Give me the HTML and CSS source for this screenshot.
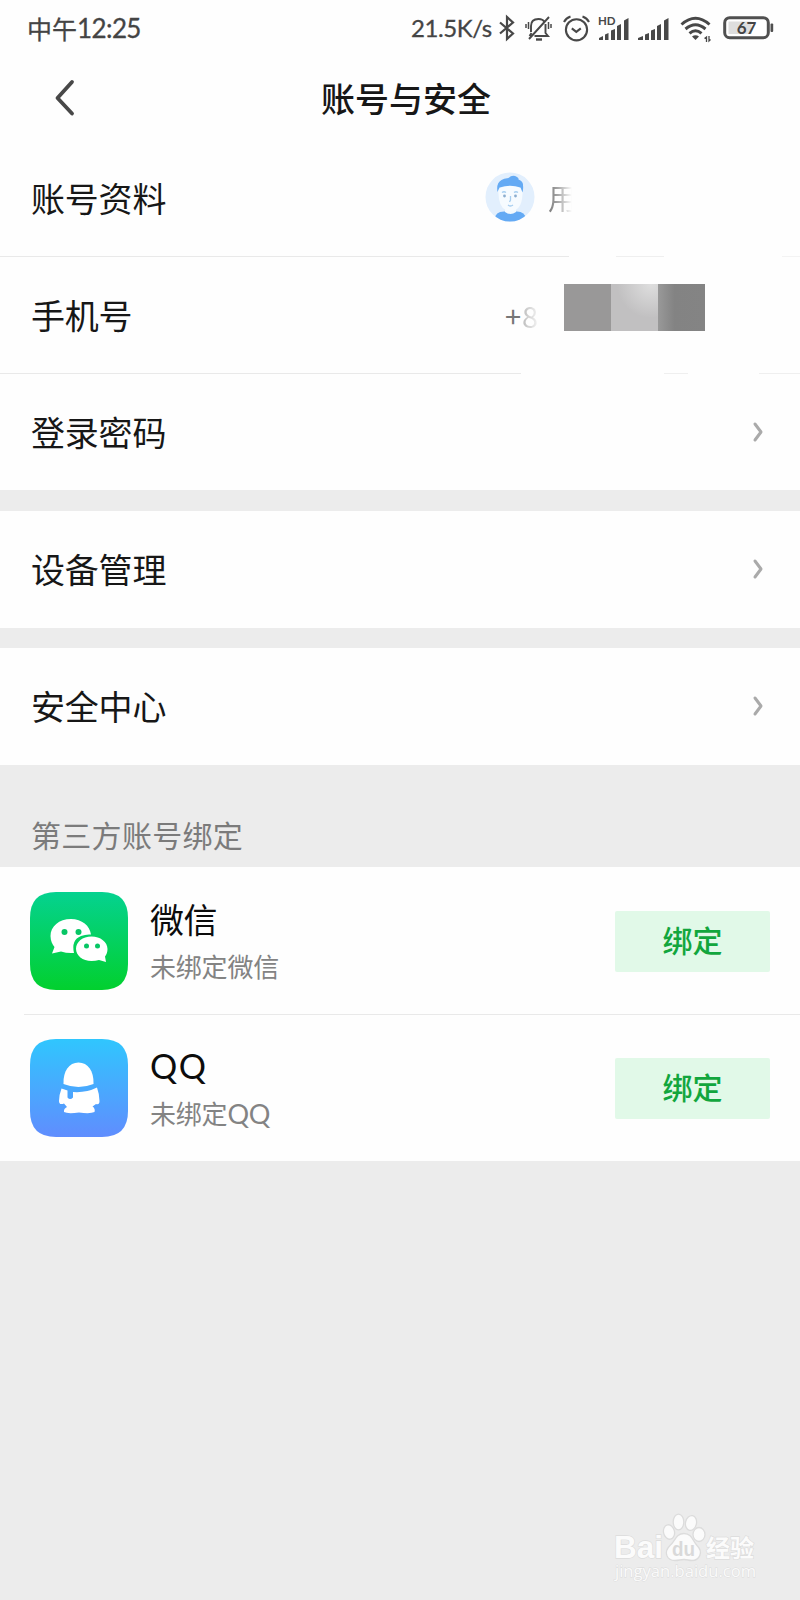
FILE: index.html
```html
<!DOCTYPE html>
<html lang="zh-CN">
<head>
<meta charset="utf-8">
<title>账号与安全</title>
<link rel="stylesheet" href="styles.css">
</head>
<body>
<div class="screen">
  <div class="status">
    <div class="clock">中午<span class="digits">12:25</span></div>
    <div class="indicators">
      <span class="speed">21.5K/s</span>
      <svg class="bt" width="16" height="26" viewBox="0 0 16 26" fill="none" stroke="#484848" stroke-width="2.200"><path d="M1 7.500 14 18.500 8 24V2l6 5.500L1 18.500"/></svg>
      <svg class="bell" width="27" height="26" viewBox="0 0 27 26" fill="none" stroke="#484848" stroke-width="1.900"><path d="M6 17V11C6 6 9 4 13.500 4c3 0 5 1 6 3M20.500 9v9l2.500 3H9.500M4.500 21 6.500 18M4 24 24 2"/><path d="M11 24.500h6" stroke-width="2.400"/><path d="M3.500 7v7M1 9v4M23.500 7v7M26 9v4" stroke-width="1.500"/></svg>
      <svg class="alarm" width="27" height="27" viewBox="0 0 27 27" fill="none" stroke="#484848" stroke-width="2.100"><circle cx="13.500" cy="14.800" r="10.600"/><path d="M8.800 13.300l4.500 3.500 4.500-3.500M1 7Q3 3 7.500 1.500M26 7Q24 3 19.500 1.500"/></svg>
      <svg class="sig-hd" width="32" height="25" viewBox="0 0 32 25" fill="#484848"><text x="0" y="9" class="hd">HD</text><path d="M1 24v-2l4-2v4zM7 18.500l3.500-1.500v7H7zM13 14.500l4-1.500v11h-4zM19 10l4-2v16h-4zM26 4.500 30.500 2v22H26z"/></svg>
      <svg class="sig" width="32" height="25" viewBox="0 0 32 25" fill="#484848"><path d="M0 24v-2l5-2v4zM7 18.500 11 17v7H7zM13 14.500 17 13v11h-4zM19 10l4-2v16h-4zM26 4.500 30.500 2v22H26z"/></svg>
      <svg class="wifi" width="32" height="25" viewBox="0 0 32 25" fill="none" stroke="#484848" stroke-width="3"><path d="M1.500 8.500q14-12.500 28 0M5.500 13q10-8.500 20 0M9.500 17.300q6-5 12 0"/><path d="M12 20.500q3.500-2.500 7 0L15.500 24z" fill="#484848" stroke="none"/><path d="M24.500 22.500 26.500 21v5M30.500 23.500l-1.500 1.500V20" stroke-width="1.300"/></svg>
      <svg class="battery" width="51" height="24" viewBox="0 0 51 24"><rect x="1.700" y="1.700" width="43.600" height="20" rx="5" fill="#fff" stroke="#505050" stroke-width="3"/><rect x="5.500" y="5.500" width="23" height="12.500" fill="#dedede"/><rect x="47.500" y="7.500" width="2.700" height="8.500" rx="1" fill="#505050"/><text x="23.500" y="18" text-anchor="middle" class="percent">67</text></svg>
    </div>
  </div>
  <header class="header">
    <svg class="back" width="22" height="38" viewBox="0 0 22 38" fill="none" stroke="#484848" stroke-width="3.800" stroke-linecap="round" stroke-linejoin="round"><path d="M18 2 3.500 18 18 33.500"/></svg>
    <h1 class="title">账号与安全</h1>
  </header>

  <section class="group">
    <div class="row">
      <span class="label">账号资料</span>
      <div class="profile">
        <svg class="avatar" width="50" height="50" viewBox="0 0 50 50">
          <defs><clipPath id="disc"><circle cx="25" cy="25" r="24.500"/></clipPath></defs>
          <circle cx="25" cy="25" r="24.500" fill="#e2effd"/>
          <g clip-path="url(#disc)"><path d="M10 47Q10 39.500 19 39.500h13Q40 39.500 41 47v5H10z" fill="#64aaf4"/><path d="M20 32h11v8q-5.500 4-11 0z" fill="#f4fafe"/></g>
          <path d="M13 17q12-7 25 0l-1 10q-2 12-11.500 12T14 27z" fill="#f6fbff"/>
          <path d="M12.500 20Q11 11 16.500 8q2-1.500 7-2 4-4 8.500-1 2 1 1.500 2.500 5 2 4.500 6 .5 3-.5 7l-2-5q-10-3.500-21 0z" fill="#64aaf4"/>
          <path d="M17 20.500q2-1.500 4 0M29 20.500q2-1.500 4 0M25.500 24v4l-1 2M23 33q2.500 2 5 0" fill="none" stroke="#a7cef0" stroke-width="1.300"/><circle cx="19.500" cy="24" r="1.400" fill="#8badce"/><circle cx="30.500" cy="24" r="1.400" fill="#8badce"/>
        </svg>
        <span class="nickname">用</span>
      </div>
    </div>
    <div class="rule rule-a"></div>
    <div class="row">
      <span class="label">手机号</span>
      <div class="phone"><span class="code">+<span class="faded">8</span></span>
        <div class="mask"><i class="m1"></i><i class="m2"></i><i class="m3"></i></div>
      </div>
    </div>
    <div class="rule rule-b"></div>
    <div class="row"><span class="label">登录密码</span><svg class="chevron" width="10" height="20" viewBox="0 0 10 20"><path d="M2 2 8 10l-6 8"/></svg></div>
  </section>
  <section class="group devices"><div class="row"><span class="label">设备管理</span><svg class="chevron" width="10" height="20" viewBox="0 0 10 20"><path d="M2 2 8 10l-6 8"/></svg></div></section>
  <section class="group security"><div class="row"><span class="label">安全中心</span><svg class="chevron" width="10" height="20" viewBox="0 0 10 20"><path d="M2 2 8 10l-6 8"/></svg></div></section>

  <h2 class="section-title">第三方账号绑定</h2>
  <section class="accounts">
    <div class="account">
      <svg class="app" width="98" height="98" viewBox="0 0 98 98">
        <defs><linearGradient id="green" x2="0" y2="1"><stop stop-color="#05d290"/><stop offset="1" stop-color="#02d02e"/></linearGradient></defs>
        <path d="M26 0h46Q98 0 98 26v46Q98 98 72 98H26Q0 98 0 72V26Q0 0 26 0z" fill="url(#green)"/>
        <path d="M41 27c-12 0-20.500 7.500-20.500 17 0 5 2 8.500 4 11l-2.500 6.500 9-2q6 2 13 1.500-3-13 7-17 5-2 10-1.500C60 34 52 27 41 27z" fill="#fff"/>
        <path d="M61.500 44.500c-9 0-15.500 5.500-15.500 12.200S52.500 69 61.500 69q4 0 7.500-1l7 2-1-5.500c1.500-2 2.500-4.500 2.500-7.500 0-7-7-12.500-16-12.500z" fill="#fff"/>
        <g fill="#07c665"><circle cx="34.500" cy="40" r="3"/><circle cx="48.500" cy="40" r="3"/><circle cx="56.500" cy="54" r="2.500"/><circle cx="67.500" cy="54" r="2.500"/></g>
      </svg>
      <div class="info"><div class="name">微信</div><div class="state">未绑定微信</div></div>
      <button class="bind">绑定</button>
    </div>
    <div class="divider"></div>
    <div class="account last">
      <svg class="app" width="98" height="98" viewBox="0 0 98 98">
        <defs><linearGradient id="blue" x2="0" y2="1"><stop stop-color="#30c6fe"/><stop offset="1" stop-color="#608dfe"/></linearGradient></defs>
        <path d="M26 0h46Q98 0 98 26v46Q98 98 72 98H26Q0 98 0 72V26Q0 0 26 0z" fill="url(#blue)"/>
        <path d="M33.500 45C33 32 39 23.500 48.500 23.500S64 32 63.500 45q-15 6-30 0z" fill="#fff"/>
        <path d="M31.500 49.500 37.500 51.500v7q2.500 3 5.500 0v-5.500Q56 54 67 48.500q2.500 7 2.500 13.500 0 4-3.500 3l-3.500 2.500q3 2 2 5.500-4 2-15.500.5-11.500 1.500-15-.5-.5-3.500 3-5l-3-3.500q-5 2-5-2.500 0-6 2.500-12.500z" fill="#fff"/>
      </svg>
      <div class="info"><div class="name latin">QQ</div><div class="state">未绑定<span class="latin-small">QQ</span></div></div>
      <button class="bind">绑定</button>
    </div>
  </section>

  <svg class="watermark" width="148" height="76" viewBox="0 0 148 76">
    <g fill="#fbfbfb" stroke="#dcdcdc" stroke-width="1.300">
      <text x="0" y="44" class="wm-bai" textLength="49" lengthAdjust="spacingAndGlyphs">Bai</text>
      <ellipse cx="55" cy="18" rx="5.500" ry="7.300" transform="rotate(-12 55 18)"/><ellipse cx="64.500" cy="8" rx="5.300" ry="7.800"/><ellipse cx="77" cy="9" rx="5.500" ry="7.500" transform="rotate(12 77 9)"/><ellipse cx="85" cy="20.500" rx="6" ry="7"/>
      <path d="M70 19.500c8 0 9 8 13 12 7 7 2 15-5 15-4 0-4-1-8-1s-5 1-9 1c-8 0-12-8-5-15 5-4 6-12 14-12z"/>
      <text x="92" y="43" class="wm-cn" textLength="48">经验</text>
    </g>
    <text x="58" y="42" class="wm-du" textLength="23" lengthAdjust="spacingAndGlyphs">du</text>
    <text x="1" y="63" class="wm-url" textLength="141" lengthAdjust="spacingAndGlyphs">jingyan.baidu.com</text>
  </svg>
</div>
</body>
</html>
```

FILE: styles.css
```css
* { box-sizing: border-box; }
body { margin: 0; background: #ececec; }
.screen {
  position: relative;
  width: 800px;
  height: 1600px;
  overflow: hidden;
  background: #ececec;
  color: #171717;
  font-family: "Noto Sans CJK SC", sans-serif;
}
svg { display: block; flex: none; overflow: visible; }

.status { display: flex; justify-content: space-between; height: 58px; padding: 0 26px 2px 27px; background: #fefefe; color: #444; }
.clock { display: flex; align-items: center; font-size: 25px; line-height: 56px; -webkit-text-stroke: .3px; }
.digits { font-family: Lato, sans-serif; font-size: 26px; letter-spacing: -.6px; }
.indicators { display: flex; align-items: center; }
.speed { width: 82px; margin-right: 6px; font: 24px/56px Lato, sans-serif; letter-spacing: -.4px; white-space: nowrap; -webkit-text-stroke: .3px; }
.bt { margin-right: 10px; }
.bell { margin-right: 11px; }
.alarm { margin-right: 8px; }
.sig-hd { margin-right: 8px; }
.sig { margin-right: 10px; }
.wifi { margin-right: 11px; }
.hd { font: 700 11.500px Lato, sans-serif; }
.percent { font: 700 17px Lato, sans-serif; fill: #444; }

.header { display: flex; align-items: center; height: 82px; padding-left: 54px; background: #fefefe; }
.title { width: 170px; margin: -2px 0 0 245px; font-size: 34px; line-height: 50px; font-weight: 500; white-space: nowrap; }

.group { margin-bottom: 21px; background: #fefefe; }
.row { display: flex; align-items: center; justify-content: space-between; height: 116px; padding: 0 37px 0 31px; }
.devices { margin-bottom: 20px; }
.security { margin-bottom: 0; }
.devices .row, .security .row { height: 117px; padding-bottom: 2px; }
.label { font-size: 34px; line-height: 50px; letter-spacing: -.2px; }
.chevron { fill: none; stroke: #aaa; stroke-width: 3; stroke-linecap: round; stroke-linejoin: round; }
.profile { display: flex; align-items: center; gap: 13px; width: 278px; padding-bottom: 2px; }
.nickname { width: 30px; font-size: 29px; line-height: 44px; color: transparent; background: linear-gradient(90deg, #777, #aaa 35%, #fefefe 80%); background-clip: text; -webkit-background-clip: text; }
.phone { display: flex; align-items: center; width: 258px; }
.code { width: 59px; color: #777; font: 29px/40px "Noto Sans CJK SC", sans-serif; letter-spacing: 1px; white-space: nowrap; }
.faded { color: transparent; background: linear-gradient(90deg, #bbb, #f7f7f7); background-clip: text; -webkit-background-clip: text; }
.mask { display: flex; height: 47px; margin-bottom: 15px; }
.mask i { width: 47px; }
.m1 { background: #999898; }
.m2 { background: radial-gradient(circle at 85% 0, #dedede, #c1c0c1 55%); }
.m3 { background: linear-gradient(90deg, #999, #838383 35%, #848484); }
.rule { height: 1px; }
.rule-a { background: linear-gradient(90deg, #e9e9e9 569px, #fefefe 569px 616px, #efefef 616px 664px, #fefefe 664px 782px, #f3f3f3 782px); }
.rule-b { background: linear-gradient(90deg, #e9e9e9 521px, #fefefe 521px 664px, #efefef 664px 688px, #fefefe 688px 759px, #efefef 759px); }

.section-title { height: 102px; margin: 0; padding: 47px 0 0 31px; color: #7b7b7b; font-size: 30px; line-height: 44px; font-weight: 400; letter-spacing: .3px; }
.accounts { background: #fefefe; }
.account { display: flex; align-items: center; height: 148px; padding: 0 30px; }
.account.last { height: 146px; }
.info { flex: 1; margin: -3px 0 0 22px; }
.name { font-size: 34px; line-height: 48px; letter-spacing: -.5px; color: #0c0c0c; }
.state { font-size: 26px; line-height: 38px; margin-top: 4px; letter-spacing: -.2px; color: #838383; }
.latin { font-family: Lato, sans-serif; letter-spacing: 1.500px; }
.latin-small { font-family: Lato, sans-serif; font-size: 27px; line-height: 1; }
.bind { width: 155px; height: 61px; padding: 0 0 4px; border: 0; border-radius: 2px; background: #e1f9e8; color: #12a63d; font: 500 30px/54px "Noto Sans CJK SC", sans-serif; }
.divider { height: 1px; margin: -1px 0 0 24px; background: #e9e9e9; }

.watermark { position: absolute; left: 614px; top: 1514px; }
.wm-bai { font: 700 31px "Liberation Sans", sans-serif; paint-order: stroke; }
.wm-cn { font: 700 24px "Noto Sans CJK SC", sans-serif; paint-order: stroke; }
.wm-du { font: 700 21px "Liberation Sans", sans-serif; fill: #d9d9d9; }
.wm-url { font: 16.500px "Open Sans", sans-serif; fill: #fafafa; stroke: #dadada; stroke-width: .8; paint-order: stroke; }
```
